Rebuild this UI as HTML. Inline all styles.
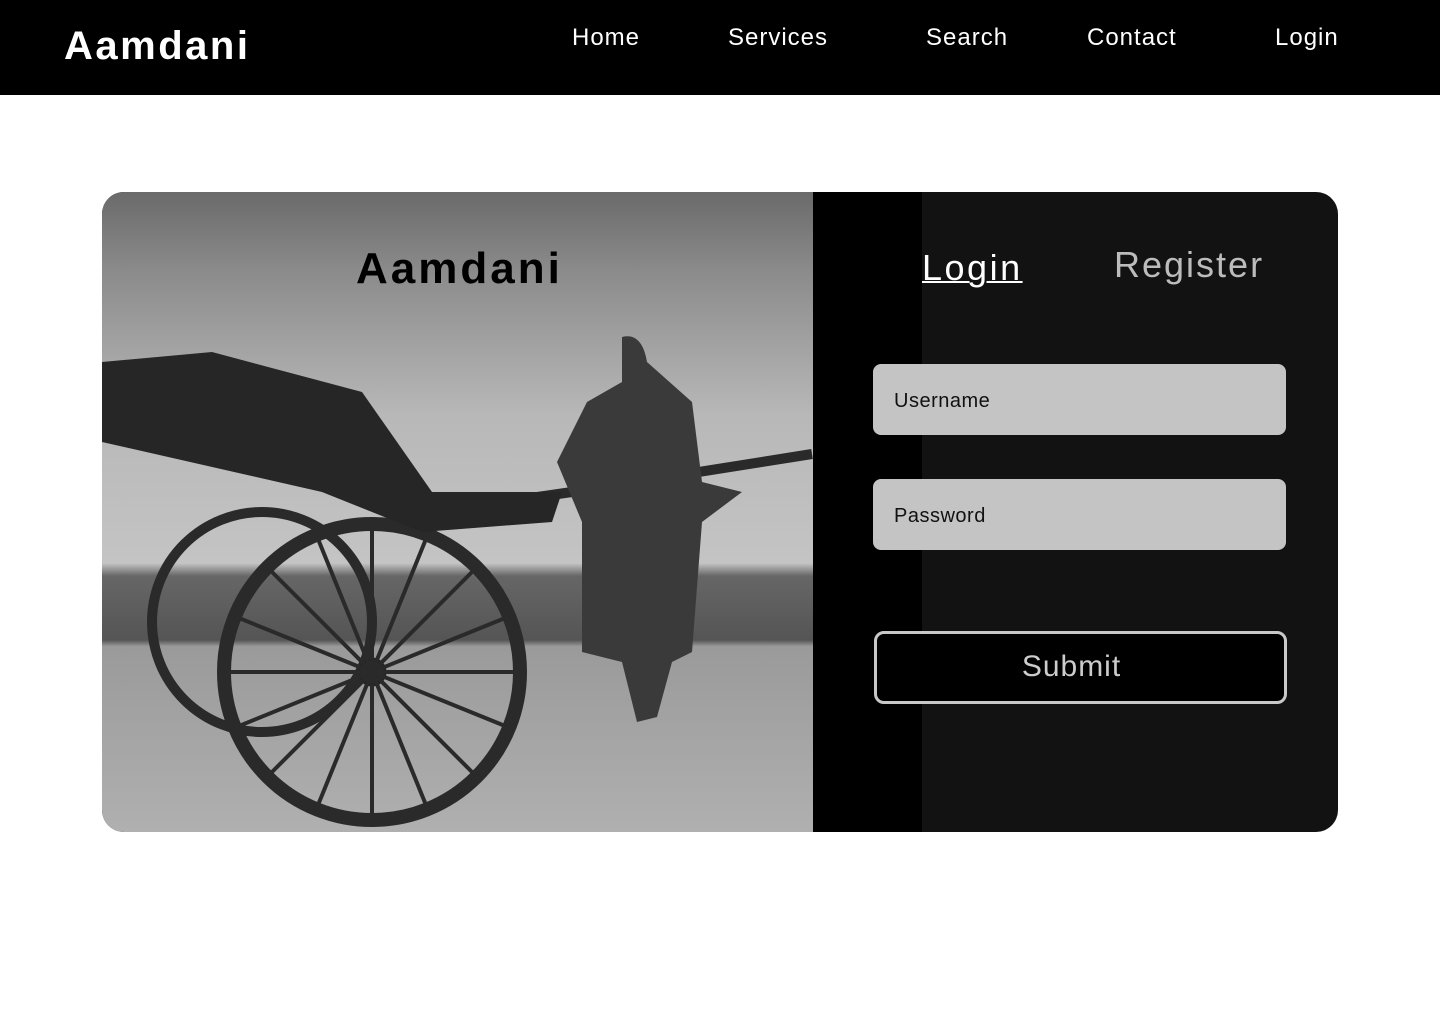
<!DOCTYPE html>
<html><head><meta charset="utf-8"><style>
*{margin:0;padding:0;box-sizing:border-box}
body{width:1440px;height:1024px;background:#fff;font-family:"Liberation Sans",sans-serif;position:relative;overflow:hidden}
.nav{position:absolute;left:0;top:0;width:1440px;height:95px;background:#000;color:#fff}
.logo{position:absolute;left:64px;top:24px;font-size:40px;font-weight:bold;letter-spacing:2.5px}
.nav a{position:absolute;top:24px;font-size:24px;color:#fff;text-decoration:none;letter-spacing:1px}
.card{position:absolute;left:102px;top:192px;width:1236px;height:640px;border-radius:22px;overflow:hidden;background:#121212}
.photo{position:absolute;left:0;top:0;width:711px;height:640px}
.strip{position:absolute;left:711px;top:0;width:109px;height:640px;background:#000}
.t{position:absolute;font-size:36px}
.in{position:absolute;left:771px;width:413px;height:71px;background:#c4c4c4;border-radius:8px;font-size:20px;color:#111;padding:26px 0 0 21px;letter-spacing:.5px}
.sub{position:absolute;left:772px;top:439px;width:413px;height:73px;border:3px solid #c8c8c8;border-radius:10px;background:#000;color:#ccc;font-size:30px;text-align:center;line-height:66px;letter-spacing:1px;padding-right:18px}
</style></head><body>
<div class="nav"><div class="logo">Aamdani</div>
<a style="left:572px">Home</a><a style="left:728px">Services</a><a style="left:926px">Search</a><a style="left:1087px">Contact</a><a style="left:1275px">Login</a></div>
<div class="card">
<svg class="photo" viewBox="0 0 711 640">
<defs><linearGradient id="g" x1="0" y1="0" x2="0" y2="1">
<stop offset="0" stop-color="#6a6a6a"/><stop offset=".12" stop-color="#8a8a8a"/><stop offset=".35" stop-color="#b8b8b8"/><stop offset=".58" stop-color="#c4c4c4"/><stop offset=".6" stop-color="#666"/><stop offset=".7" stop-color="#555"/><stop offset=".71" stop-color="#9a9a9a"/><stop offset="1" stop-color="#b0b0b0"/></linearGradient></defs>
<rect width="711" height="640" fill="url(#g)"/>
<g fill="none" stroke="#2a2a2a">
<circle cx="160" cy="430" r="110" stroke-width="10"/>
<circle cx="270" cy="480" r="148" stroke-width="14"/>
<circle cx="270" cy="480" r="14" fill="#222"/>
<path d="M270 332V628M122 480H418M165 375L375 585M375 375L165 585M214 342L326 618M326 342L214 618M132 424L408 536M132 536L408 424" stroke-width="4"/>
<path d="M0 175L230 220L330 320L470 300L710 262" stroke-width="10"/>
</g>
<path d="M0 170L110 160L260 200L330 300L460 300L450 330L320 340L220 300L0 250Z" fill="#262626"/>
<path d="M520 145Q540 140 545 170L590 210L600 290L640 300L600 330L590 460L570 470L555 525L535 530L520 470L480 460L480 330L455 270L485 210L520 190Z" fill="#3a3a3a"/>
</svg>
<div class="strip"></div>
<div class="t" style="left:254px;top:52px;font-weight:bold;font-size:44px;color:#000;letter-spacing:3px">Aamdani</div>
<div class="t" style="left:820px;top:55px;color:#fff;text-decoration:underline;text-decoration-thickness:2px;letter-spacing:2.5px">Login</div>
<div class="t" style="left:1012px;top:52px;color:#bcbcbc;letter-spacing:2px">Register</div>
<div class="in" style="top:172px">Username</div>
<div class="in" style="top:287px">Password</div>
<div class="sub">Submit</div>
</div>
</body></html>
